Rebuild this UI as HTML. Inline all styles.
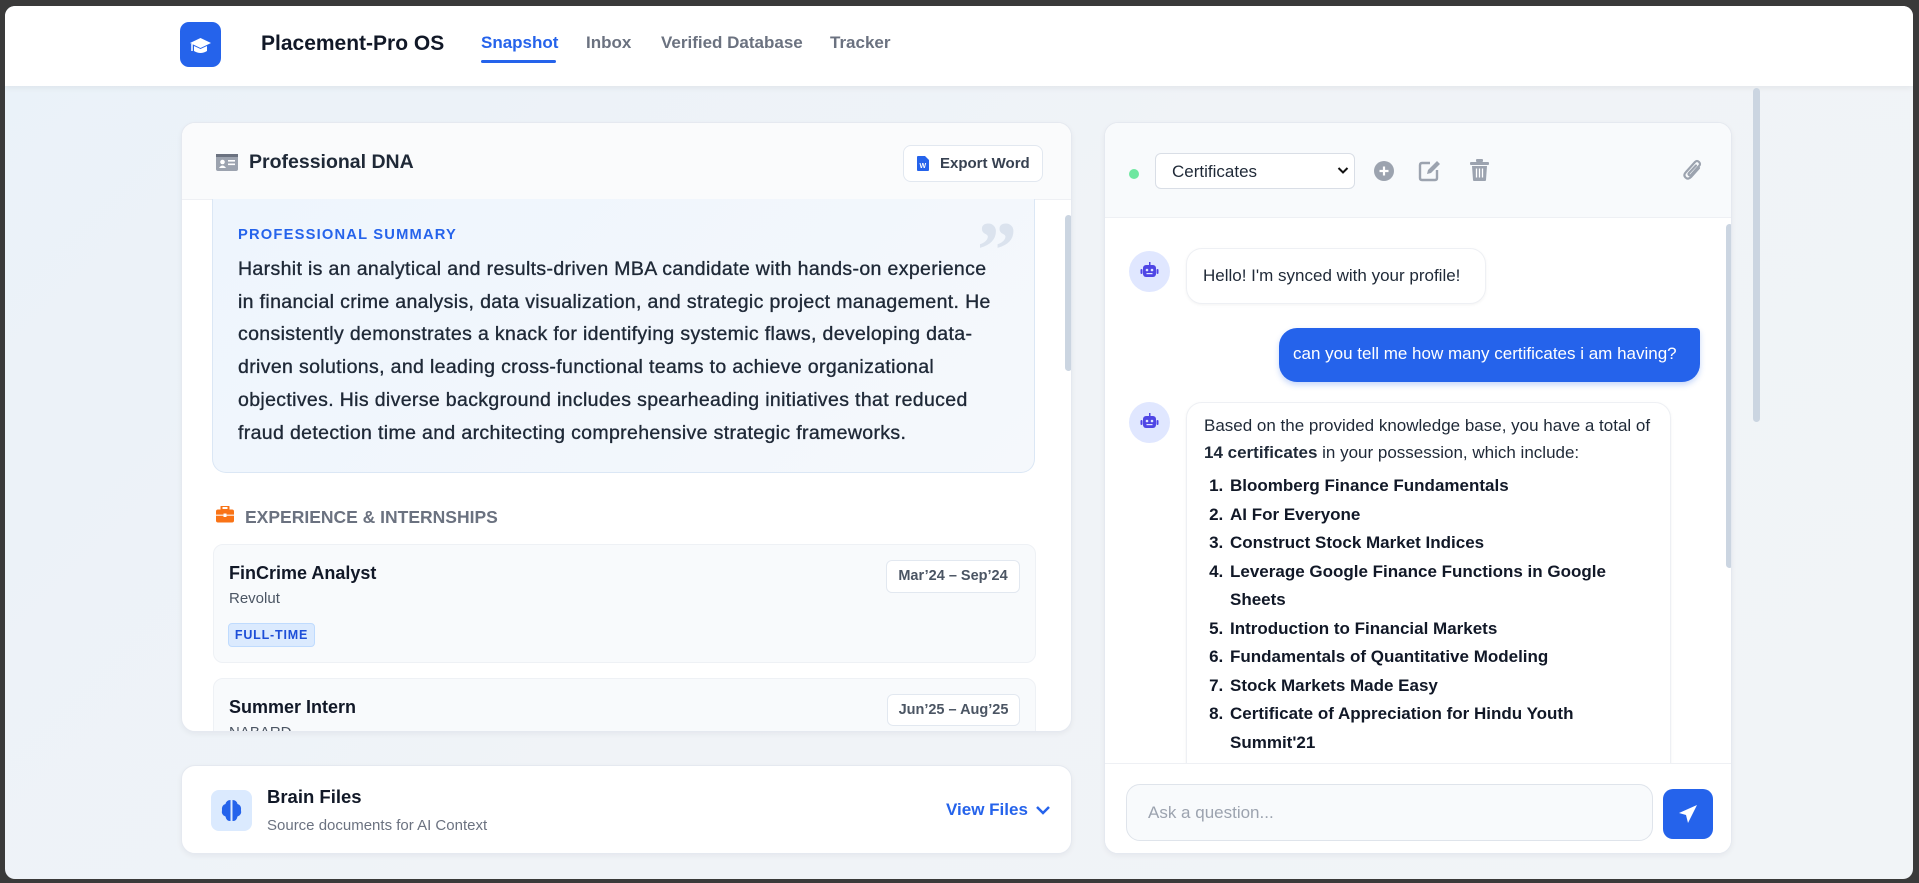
<!DOCTYPE html>
<html><head><meta charset="utf-8"><style>
*{box-sizing:border-box;margin:0;padding:0}
body{width:1919px;height:883px;background:#3a3a3a;font-family:"Liberation Sans",sans-serif;overflow:hidden;position:relative}
.win{position:absolute;left:5px;top:6px;width:1908px;height:873px;border-radius:10px;background:linear-gradient(135deg,#eaf2f9,#f0f3f7 50%,#f1f4f7);overflow:hidden}
.hdr{position:absolute;left:0;top:0;width:100%;height:80px;background:#fff;box-shadow:0 2px 6px rgba(0,0,0,.06)}
.abs{position:absolute}
.card{position:absolute;background:#fff;border:1px solid #e5e9f0;border-radius:14px;box-shadow:0 2px 6px rgba(15,23,42,.05);overflow:hidden}
.nav{position:absolute;top:27px;font-size:17px;font-weight:bold;color:#6b7280}
p.sum{font-size:19.5px;line-height:32.7px;color:#1f2937;font-weight:normal;letter-spacing:.35px;white-space:nowrap;-webkit-text-stroke:.35px #1f2937}
.pill{position:absolute;border:1px solid #e2e8f0;background:#fff;border-radius:6px;font-size:14.5px;font-weight:bold;color:#4b5563;text-align:center}
.bubble{position:absolute;background:#fff;border:1px solid #eef0f4;border-radius:16px;font-size:17px;color:#1f2937;box-shadow:0 1px 3px rgba(0,0,0,.05)}
.av{position:absolute;width:41px;height:41px;border-radius:50%;background:#e0e7ff}
ol{margin-left:24px;font-weight:bold;color:#111827;font-size:17px;line-height:28.5px}
ol li{padding-left:2px}
</style></head><body>
<div class="win">
 <div class="hdr">
  <div class="abs" style="left:175px;top:16px;width:41px;height:45px;border-radius:9px;background:#2563eb">
   <svg width="41" height="45" viewBox="0 0 41 45"><path d="M10 21 L20.5 16 L31 21 L20.5 26Z" fill="#fff"/><path d="M14 24 v5 q6.5 4 13 0 v-5 l-6.5 3z" fill="#fff"/><path d="M12 22 v7" stroke="#fff" stroke-width="1.5"/></svg>
  </div>
  <div class="abs" style="left:256px;top:26px;font-size:21px;font-weight:bold;color:#111827">Placement-Pro OS</div>
  <div class="nav" style="left:476px;color:#2563eb">Snapshot</div>
  <div class="abs" style="left:476px;top:54px;width:75px;height:3px;background:#2563eb;border-radius:2px"></div>
  <div class="nav" style="left:581px">Inbox</div>
  <div class="nav" style="left:656px">Verified Database</div>
  <div class="nav" style="left:825px">Tracker</div>
 </div>

 <!-- left card -->
 <div class="card" style="left:176px;top:116px;width:891px;height:610px">
  <div class="abs" style="left:0;top:0;width:100%;height:77px;background:#fafbfc;border-bottom:1px solid #eef0f4"></div>
  <svg class="abs" style="left:34px;top:31px" width="22" height="17" viewBox="0 0 22 17"><rect x="0" y="0" width="22" height="17" rx="2" fill="#9ca3af"/><rect x="0" y="0" width="22" height="3" fill="#6b7280"/><circle cx="6.5" cy="8" r="2.3" fill="#fff"/><path d="M3 14 q3.5-5 7 0z" fill="#fff"/><rect x="12" y="6" width="7" height="1.6" fill="#fff"/><rect x="12" y="9.5" width="7" height="1.6" fill="#fff"/></svg>
  <div class="abs" style="left:67px;top:28px;font-size:19.5px;color:#1f2937;font-weight:bold">Professional DNA</div>
  <div class="abs" style="left:721px;top:22px;width:140px;height:37px;border:1px solid #e2e8f0;border-radius:8px;background:#fff;font-size:15px;color:#374151;padding:9px 0 0 36px;font-weight:bold">Export Word</div>
  <svg class="abs" style="left:735px;top:33px" width="12" height="15" viewBox="0 0 12 15"><path d="M0 1 q0-1 1-1 h7 l4 4 v10 q0 1-1 1 h-10 q-1 0-1-1z" fill="#2563eb"/><text x="2.5" y="12" font-size="7" fill="#fff" font-family="Liberation Sans" font-weight="bold">W</text></svg>
  <div class="abs" style="top:92px;width:7px;height:156px;background:#cbd5e1;border-radius:4px;left:883px"></div>
  <div class="abs" style="left:30px;top:76px;width:823px;height:274px;background:linear-gradient(135deg,#eef5fd,#f5f8fc);border:1px solid #dbe7f5;border-radius:14px;border-top:none;border-top-left-radius:0;border-top-right-radius:0">
   <div class="abs" style="left:25px;top:28px;font-size:14.7px;font-weight:bold;color:#2563eb;letter-spacing:1.2px">PROFESSIONAL SUMMARY</div>
   <div class="abs" style="left:764px;top:12px;font-size:80px;font-family:'Liberation Serif',serif;font-weight:bold;color:#dbe3ee;line-height:1">&rdquo;</div>
   <p class="sum abs" style="left:25px;top:54px">Harshit is an analytical and results-driven MBA candidate with hands-on experience<br>in financial crime analysis, data visualization, and strategic project management. He<br>consistently demonstrates a knack for identifying systemic flaws, developing data-<br>driven solutions, and leading cross-functional teams to achieve organizational<br>objectives. His diverse background includes spearheading initiatives that reduced<br>fraud detection time and architecting comprehensive strategic frameworks.</p>
  </div>
  <svg class="abs" style="left:34px;top:383px" width="18" height="17" viewBox="0 0 18 17"><rect x="5.5" y="0" width="7" height="4" rx="1" fill="none" stroke="#f97316" stroke-width="2"/><rect x="0" y="3.5" width="18" height="13" rx="2" fill="#f97316"/><rect x="0" y="8.5" width="18" height="1.5" fill="#fff" opacity=".7"/><rect x="7.5" y="7.5" width="3" height="3.5" fill="#fff"/></svg>
  <div class="abs" style="left:63px;top:384px;font-size:17.5px;font-weight:bold;color:#6b7280">EXPERIENCE &amp; INTERNSHIPS</div>
  <div class="abs" style="left:31px;top:421px;width:823px;height:119px;background:#f8fafc;border:1px solid #eef1f5;border-radius:10px">
   <div class="abs" style="left:15px;top:18px;font-size:18px;font-weight:bold;color:#111827">FinCrime Analyst</div>
   <div class="abs" style="left:15px;top:45px;font-size:15px;color:#4b5563">Revolut</div>
   <div class="abs" style="left:14px;top:78px;width:87px;height:24px;background:#dbeafe;border:1px solid #bfdbfe;border-radius:4px;font-size:12.5px;color:#1d4ed8;text-align:center;line-height:22px;letter-spacing:.8px;font-weight:bold">FULL-TIME</div>
   <div class="pill" style="left:672px;top:15px;width:134px;height:33px;line-height:31px">Mar’24 – Sep’24</div>
  </div>
  <div class="abs" style="left:31px;top:555px;width:823px;height:119px;background:#f8fafc;border:1px solid #eef1f5;border-radius:10px">
   <div class="abs" style="left:15px;top:18px;font-size:18px;font-weight:bold;color:#111827">Summer Intern</div>
   <div class="abs" style="left:15px;top:45px;font-size:15px;color:#4b5563">NABARD</div>
   <div class="pill" style="left:673px;top:15px;width:133px;height:32px;line-height:30px">Jun’25 – Aug’25</div>
  </div>
 </div>

 <!-- brain files -->
 <div class="card" style="left:176px;top:759px;width:891px;height:89px">
  <div class="abs" style="left:29px;top:24px;width:41px;height:41px;border-radius:8px;background:#dbeafe"></div>
  <svg class="abs" style="left:39px;top:33px" width="21" height="23" viewBox="0 0 21 23"><path d="M9.5 1 q-4 0-5 4 q-4 1-3.5 6 q-1 5 3.5 6.5 q1 5 5 4.5z" fill="#2563eb"/><path d="M11.5 1 q4 0 5 4 q4 1 3.5 6 q1 5-3.5 6.5 q-1 5-5 4.5z" fill="#2563eb"/></svg>
  <div class="abs" style="left:85px;top:20px;font-size:18.5px;color:#111827;font-weight:bold">Brain Files</div>
  <div class="abs" style="left:85px;top:51px;font-size:15px;color:#6b7280">Source documents for AI Context</div>
  <div class="abs" style="left:764px;top:34px;font-size:17px;font-weight:bold;color:#2563eb">View Files</div>
  <svg class="abs" style="left:853px;top:38px" width="16" height="12" viewBox="0 0 16 12"><path d="M2 3 L8 9 L14 3" stroke="#2563eb" stroke-width="2.5" fill="none"/></svg>
 </div>

 <!-- right chat card -->
 <div class="card" style="left:1099px;top:116px;width:628px;height:732px">
  <div class="abs" style="left:0;top:0;width:100%;height:95px;background:#f8fafc;border-bottom:1px solid #eef0f4"></div>
  <div class="abs" style="left:24px;top:46px;width:10px;height:10px;border-radius:50%;background:#6ee7a0"></div>
  <div class="abs" style="left:50px;top:30px;width:200px;height:36px;border:1px solid #d9dee6;border-radius:6px;background:#fff;font-size:17px;color:#1f2937;padding:8px 0 0 16px">Certificates</div>
  <svg class="abs" style="left:232px;top:43px" width="12" height="9" viewBox="0 0 12 9"><path d="M1.5 2 L6 6.5 L10.5 2" stroke="#111" stroke-width="2" fill="none"/></svg>
  <svg class="abs" style="left:268px;top:37px" width="22" height="22" viewBox="0 0 22 22"><circle cx="11" cy="11" r="10" fill="#9ca3af"/><path d="M11 6.5v9M6.5 11h9" stroke="#fff" stroke-width="2.2"/></svg>
  <svg class="abs" style="left:313px;top:36px" width="23" height="23" viewBox="0 0 23 23"><path d="M12 4 H4 q-2 0-2 2 v13 q0 2 2 2 h13 q2 0 2-2 v-8" stroke="#9ca3af" stroke-width="2.4" fill="none"/><path d="M9 15 l1-4 L19 2 l3 3 L13 14z" fill="#9ca3af"/></svg>
  <svg class="abs" style="left:365px;top:36px" width="19" height="22" viewBox="0 0 19 22"><rect x="0" y="3" width="19" height="3" rx="1" fill="#9ca3af"/><rect x="6" y="0" width="7" height="3" rx="1" fill="#9ca3af"/><path d="M2 7 h15 l-1 14 q0 1-1 1 h-11 q-1 0-1-1z" fill="#9ca3af"/><path d="M6.5 9.5v9M9.5 9.5v9M12.5 9.5v9" stroke="#fff" stroke-width="1.3"/></svg>
  <svg class="abs" style="left:577px;top:35px" width="22" height="25" viewBox="0 0 22 25"><path d="M17 10 L9 19 q-3 3-5.5 0.5 q-2.5-2.5 0.5-5.5 L13 4 q2-2 4-0 q2 2 0 4 L9 17 q-1 1-2 0 q-1-1 0-2 l7-7.5" stroke="#9ca3af" stroke-width="2.2" fill="none" stroke-linecap="round"/></svg>
  <div class="abs" style="left:621px;top:101px;width:7px;height:344px;background:#cbd5e1;border-radius:4px"></div>

  <div class="av" style="left:24px;top:128px"></div>
  <svg class="abs" style="left:35px;top:138px" width="19" height="19" viewBox="0 0 19 19"><rect x="9" y="1" width="1.5" height="3" fill="#4f46e5"/><rect x="3" y="4" width="13" height="12" rx="3" fill="#4f46e5"/><rect x="0.5" y="8" width="2" height="5" rx="1" fill="#4f46e5"/><rect x="16.5" y="8" width="2" height="5" rx="1" fill="#4f46e5"/><circle cx="7" cy="9" r="1.3" fill="#e0e7ff"/><circle cx="12" cy="9" r="1.3" fill="#e0e7ff"/><rect x="6.5" y="12" width="6" height="1.2" fill="#e0e7ff"/></svg>
  <div class="bubble" style="left:81px;top:125px;width:300px;height:56px;padding:17px 0 0 16px">Hello! I'm synced with your profile!</div>
  <div class="abs" style="left:174px;top:205px;width:421px;height:54px;background:#2563eb;border-radius:18px 4px 18px 18px;color:#fff;font-size:17px;padding:16px 0 0 14px;box-shadow:0 3px 6px rgba(37,99,235,.25)">can you tell me how many certificates i am having?</div>

  <div class="av" style="left:24px;top:279px"></div>
  <svg class="abs" style="left:35px;top:289px" width="19" height="19" viewBox="0 0 19 19"><rect x="9" y="1" width="1.5" height="3" fill="#4f46e5"/><rect x="3" y="4" width="13" height="12" rx="3" fill="#4f46e5"/><rect x="0.5" y="8" width="2" height="5" rx="1" fill="#4f46e5"/><rect x="16.5" y="8" width="2" height="5" rx="1" fill="#4f46e5"/><circle cx="7" cy="9" r="1.3" fill="#e0e7ff"/><circle cx="12" cy="9" r="1.3" fill="#e0e7ff"/><rect x="6.5" y="12" width="6" height="1.2" fill="#e0e7ff"/></svg>
  <div class="bubble" style="left:81px;top:279px;width:485px;height:400px;padding:9px 16px 0 17px;line-height:27px">
   Based on the provided knowledge base, you have a total of <b>14 certificates</b> in your possession, which include:
   <ol style="margin-top:6px">
    <li>Bloomberg Finance Fundamentals</li>
    <li>AI For Everyone</li>
    <li>Construct Stock Market Indices</li>
    <li>Leverage Google Finance Functions in Google Sheets</li>
    <li>Introduction to Financial Markets</li>
    <li>Fundamentals of Quantitative Modeling</li>
    <li>Stock Markets Made Easy</li>
    <li>Certificate of Appreciation for Hindu Youth Summit'21</li>
    <li>Financial Modeling</li>
   </ol>
  </div>
  <div class="abs" style="left:0;top:640px;width:100%;height:92px;background:#fff;border-top:1px solid #eef0f4"></div>
  <div class="abs" style="left:21px;top:661px;width:527px;height:57px;border:1px solid #dfe4eb;border-radius:14px;background:#f8fafc;font-size:17px;color:#9ca3af;padding:18px 0 0 21px">Ask a question...</div>
  <div class="abs" style="left:558px;top:666px;width:50px;height:50px;border-radius:10px;background:#2563eb"></div>
  <svg class="abs" style="left:573px;top:681px" width="20" height="20" viewBox="0 0 20 20"><path d="M19 1 L1 9 L8 11 Z M19 1 L10 19 L8 11 Z" fill="#fff"/></svg>
 </div>
 <div class="abs" style="left:1748px;top:82px;width:7px;height:334px;background:#cbd5e1;border-radius:4px"></div>
</div>
</body></html>
